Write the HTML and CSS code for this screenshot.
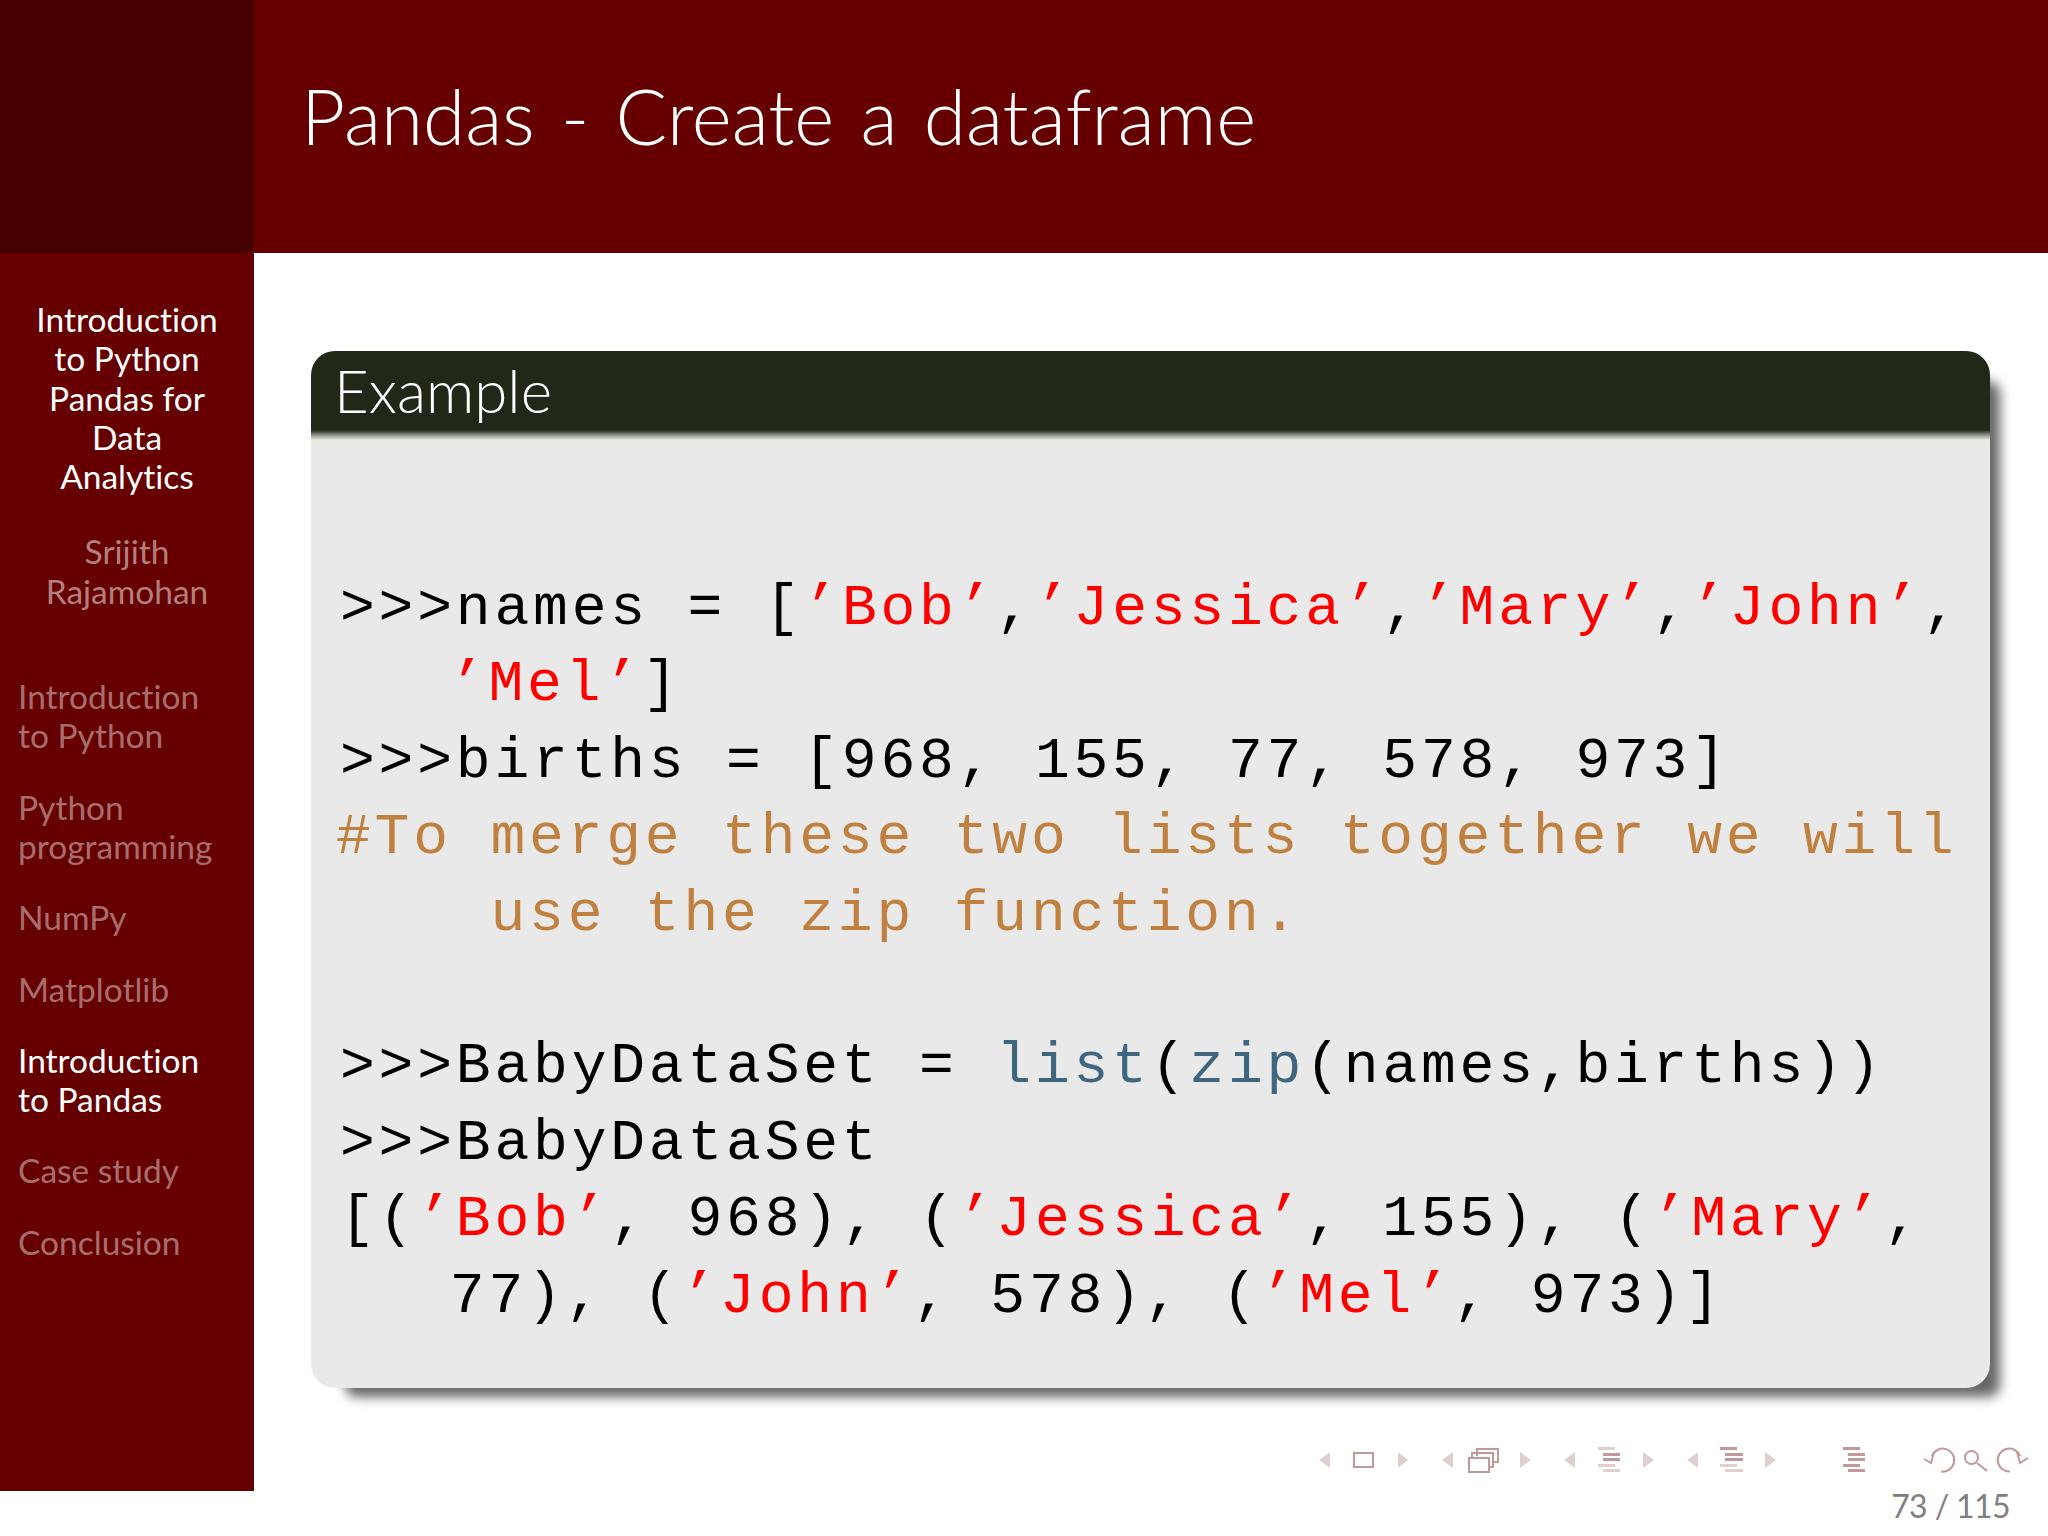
FILE: index.html
```html
<!DOCTYPE html>
<html lang="en">
  <head>
    <meta charset="UTF-8" />
    <meta name="viewport" content="width=device-width, initial-scale=1.0" />
    <title>Pandas - Create a dataframe</title>
    <link rel="stylesheet" href="styles.css">
  </head>
  <body>
    <div class="slide">
      <div class="corner"></div>
      <header class="frametitle">
        <h1>Pandas - Create a dataframe</h1>
      </header>

      <nav class="sidebar">
        <div class="deck-title">Introduction<br />to Python<br />Pandas for<br />Data<br />Analytics</div>
        <div class="deck-author">Srijith<br />Rajamohan</div>
        <ul class="sections">
          <li>Introduction<br />to Python</li>
          <li>Python<br />programming</li>
          <li>NumPy</li>
          <li>Matplotlib</li>
          <li class="current">Introduction<br />to Pandas</li>
          <li>Case study</li>
          <li>Conclusion</li>
        </ul>
      </nav>

      <main class="content">
        <section class="block">
          <h2 class="block-title">Example</h2>
          <pre class="block-body">&gt;&gt;&gt;names = [<span class="str">’Bob’</span>,<span class="str">’Jessica’</span>,<span class="str">’Mary’</span>,<span class="str">’John’</span>,
   <span class="str hang">’Mel’</span>]
&gt;&gt;&gt;births = [968, 155, 77, 578, 973]
<span class="comment">#To merge these two lists together we will
    use the zip function.</span>
&gt;&gt;&gt;BabyDataSet = <span class="builtin">list</span>(<span class="builtin">zip</span>(names,births))
&gt;&gt;&gt;BabyDataSet
[(<span class="str">’Bob’</span>, 968), (<span class="str">’Jessica’</span>, 155), (<span class="str">’Mary’</span>,
   <span class="hang">77</span>), (<span class="str">’John’</span>, 578), (<span class="str">’Mel’</span>, 973)]</pre>
        </section>

        <footer class="slide-foot">
          <svg class="nav-symbols" viewBox="1310 1440 730 40" aria-hidden="true">
            <g class="faint">
              <path d="M1319 1460 1330 1452V1468Z" />
              <path d="M1408 1460 1398 1452V1468Z" />
              <path d="M1442 1460 1453 1452V1468Z" />
              <path d="M1531 1460 1520 1452V1468Z" />
              <path d="M1564 1460 1575 1452V1468Z" />
              <path d="M1654 1460 1643 1452V1468Z" />
              <path d="M1687 1460 1698 1452V1468Z" />
              <path d="M1776 1460 1765 1452V1468Z" />
              <rect x="1598" y="1447" width="17" height="3" />
              <rect x="1598" y="1464" width="17" height="3" />
              <rect x="1603" y="1469" width="17" height="3" />
              <rect x="1720" y="1464" width="17" height="3" />
              <rect x="1725" y="1469" width="18" height="3" />
            </g>
            <g class="solid">
              <rect x="1603" y="1453" width="17" height="3" />
              <rect x="1603" y="1458" width="17" height="3" />
              <rect x="1720" y="1447" width="17" height="3" />
              <rect x="1725" y="1453" width="18" height="3" />
              <rect x="1725" y="1458" width="18" height="3" />
              <rect x="1843" y="1447" width="17" height="3" />
              <rect x="1848" y="1453" width="17" height="3" />
              <rect x="1848" y="1458" width="17" height="3" />
              <rect x="1843" y="1464" width="17" height="3" />
              <rect x="1848" y="1469" width="17" height="3" />
            </g>
            <g class="outline">
              <rect x="1354" y="1453" width="19" height="14" />
              <path d="M1477 1456V1449H1498V1462H1493" />
              <path d="M1472 1459V1453H1493V1467H1489" />
              <rect x="1469" y="1458" width="20" height="14" />
              <path d="M1941 1471.5A11.5 11.5 0 1 0 1932 1456" />
              <path d="M1924 1459 1931 1463 1934 1452" />
              <circle cx="1971.5" cy="1457.5" r="6.5" />
              <path d="M1977 1463 1987 1471" />
              <path d="M2010 1471.5A11.5 11.5 0 1 1 2020 1456" />
              <path d="M2028 1458 2020 1463 2017 1452" />
            </g>
          </svg>
          <div class="page-number">73 / 115</div>
        </footer>
      </main>
    </div>
  </body>
</html>
```

FILE: styles.css
```css
body {
  margin: 0;
  background-color: white;
  font-family: "Lato", sans-serif;
  font-variant-ligatures: none;
}

.slide {
  display: grid;
  grid-template-columns: 254px 1fr;
  grid-template-rows: 253px 1238px 45px;
  height: 1536px;
  overflow: hidden;
}

.corner {
  background-color: #470000;
}

.frametitle {
  background-color: #660000;
  color: white;
  padding: 0 0 0 47px;
  display: flex;
  align-items: center;
}

.frametitle h1 {
  margin: 0 0 22px 0;
  font-size: 76.5px;
  font-weight: 300;
  line-height: 1.2;
  word-spacing: 5.5px;
}

.sidebar {
  background-color: #660000;
  padding-top: 47px;
  color: white;
  font-size: 33.5px;
  line-height: 39.3px;
}

.deck-title {
  text-align: center;
}

.deck-author {
  margin-top: 36px;
  text-align: center;
  color: #b27f7f;
}

.sections {
  list-style: none;
  margin: 66px 0 0 0;
  padding: 0 0 0 18px;
  display: flex;
  flex-direction: column;
  gap: 32px;
  color: #a86e6e;
}

.sections .current {
  color: white;
}

.content {
  grid-column: 2;
  grid-row: 2 / 4;
  padding: 98px 58px 0 57px;
  display: flex;
  flex-direction: column;
}

.block {
  position: relative;
  isolation: isolate;
  height: 1037px;
  display: flex;
  flex-direction: column;
}

.block::before {
  content: "";
  position: absolute;
  z-index: -1;
  top: 30px;
  left: 34px;
  right: -10px;
  bottom: -9px;
  background-color: #666;
  border-radius: 12px;
  filter: blur(6px);
}

.block-title {
  margin: 0;
  height: 79px;
  padding-left: 23px;
  background-color: #212818;
  border-radius: 24px 24px 0 0;
  color: white;
  font-size: 60px;
  font-weight: 300;
  line-height: 78px;
}

.block-body {
  flex: 1;
  margin: 0;
  padding: 141px 0 0 29px;
  background: linear-gradient(#212818, #8a8f84 5px, #e8e9e5 10px, #e9e9e9 30px);
  border-radius: 0 0 24px 24px;
  color: black;
  font-family: "Liberation Mono", monospace;
  font-size: 58px;
  letter-spacing: 3.8px;
  line-height: 76.4px;
}

.str {
  color: #f00;
}

.hang {
  margin-left: -6px;
}

.comment {
  display: block;
  margin-left: -4px;
  color: #bf8040;
}

.builtin {
  color: #40667f;
}

.slide-foot {
  margin-top: 52px;
  margin-right: -50px;
  display: flex;
  flex-direction: column;
  align-items: flex-end;
}

.nav-symbols {
  display: block;
  width: 730px;
  height: 40px;
}

.nav-symbols .faint {
  fill: #e0cfcf;
}

.nav-symbols .solid {
  fill: #c29999;
}

.nav-symbols .outline {
  fill: none;
  stroke: #c29999;
  stroke-width: 2;
}

.page-number {
  margin: 6px 30px 0 0;
  color: #808080;
  font-size: 32px;
  line-height: 40px;
  letter-spacing: -0.6px;
}
```
